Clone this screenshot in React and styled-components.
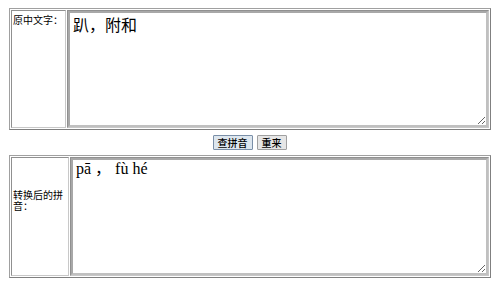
import React from "react";
import styled, { createGlobalStyle } from "styled-components";

const Global = createGlobalStyle`
  html, body { margin: 0; padding: 0; background: #fff; }
  body { padding: 8px 9px 0 9px; font-family: "Noto Sans CJK SC", sans-serif; }
`;

const Table = styled.table`
  width: 482px;
  border: 1px solid #a0a0a0;
  border-right-color: #808080;
  border-bottom-color: #808080;
  border-collapse: separate;
  border-spacing: 1px;
  margin-top: ${(p) => p.$mt || 0}px;
`;

const Label = styled.td`
  width: ${(p) => p.$w}px;
  border: 1px solid #909090;
  border-right-color: #c8c8c8;
  border-bottom-color: #c8c8c8;
  padding: 0 0 ${(p) => p.$pb || 0}px 0;
  font-size: 10px;
  line-height: 11px;
  color: #000;
  vertical-align: ${(p) => p.$valign};
  font-family: "Noto Sans CJK SC", sans-serif;
`;

const LabelText = styled.div`
  padding: 3px 1px;
  white-space: ${(p) => (p.$nowrap ? "nowrap" : "normal")};
`;

const Field = styled.td`
  border: 1px solid #909090;
  border-right-color: #c8c8c8;
  border-bottom-color: #c8c8c8;
  padding: 0;
`;

const Area = styled.textarea`
  display: block;
  width: 100%;
  box-sizing: border-box;
  height: ${(p) => p.$h}px;
  border: 2px solid #c0c0c0;
  border-top-color: #a8a8a8;
  border-left-color: #a8a8a8;
  outline: none;
  padding: ${(p) => p.$pt}px 3px 2px 3px;
  margin: 0;
  font-family: ${(p) => p.$font};
  font-size: ${(p) => p.$size}px;
  line-height: ${(p) => p.$lh}px;
  color: #000;
  background: #fff;
`;

const Buttons = styled.div`
  display: flex;
  justify-content: center;
  gap: 4px;
  margin-top: 5px;
`;

const Button = styled.button`
  height: 15px;
  padding: 0 4px;
  font-size: 10px;
  line-height: 12px;
  font-weight: 500;
  font-family: "Noto Sans CJK SC", sans-serif;
  border: 1px solid ${(p) => (p.$focus ? "#7a8fa8" : "#a0a0a0")};
  background: ${(p) => (p.$focus ? "#dde6ee" : "#e6e6e6")};
  color: #000;
  border-radius: 1px;
`;

export default function App() {
  return (
    <>
      <Global />
      <Table>
        <tbody>
          <tr>
            <Label $w={53} $valign="top">
              <LabelText $nowrap>原中文字：</LabelText>
            </Label>
            <Field>
              <Area
                $h={116}
                $pt={0}
                $lh={22}
                $font={'"Noto Sans CJK SC", sans-serif'}
                $size={16}
                defaultValue="趴，附和"
              />
            </Field>
          </tr>
        </tbody>
      </Table>
      <Buttons>
        <Button $focus>查拼音</Button>
        <Button>重来</Button>
      </Buttons>
      <Table $mt={5}>
        <tbody>
          <tr>
            <Label $w={56} $valign="middle" $pb={34}>
              <LabelText>转换后的拼音：</LabelText>
            </Label>
            <Field>
              <Area
                $h={117}
                $pt={0}
                $lh={18}
                $font={'"Liberation Serif", "Noto Sans CJK SC", serif'}
                $size={16}
                defaultValue="pā ， fù hé"
              />
            </Field>
          </tr>
        </tbody>
      </Table>
    </>
  );
}
